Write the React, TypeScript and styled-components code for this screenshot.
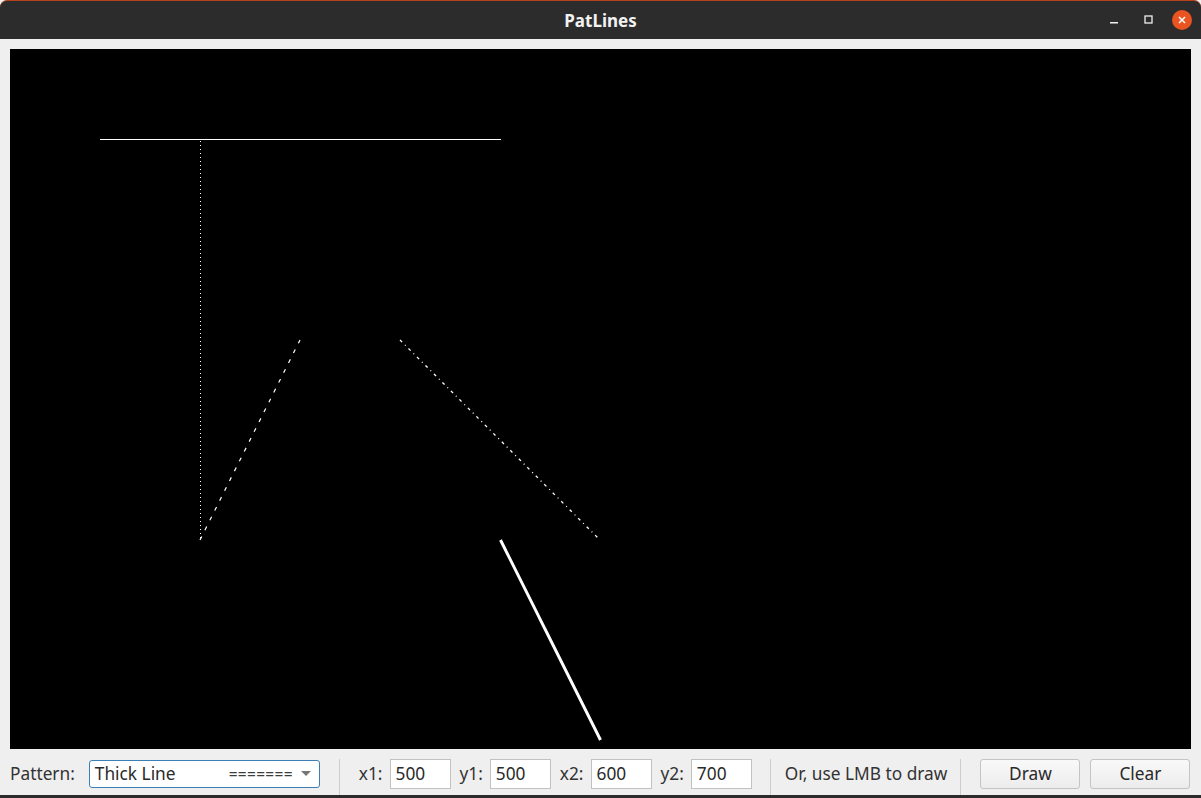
import React from "react";
import styled, { createGlobalStyle } from "styled-components";

const Global = createGlobalStyle`
  html, body { margin: 0; padding: 0; background: #2b2b2b; }
  body { font-family: "Noto Sans", "DejaVu Sans", sans-serif; }
  * { box-sizing: border-box; }
`;

const Window = styled.div`
  width: 1201px;
  height: 798px;
  display: flex;
  flex-direction: column;
  background: #efefef;
  overflow: hidden;
`;

const TitleBar = styled.div`
  height: 39px;
  flex: none;
  position: relative;
  display: flex;
  align-items: center;
  justify-content: center;
  background: #2c2c2c;
  border-top: 1px solid #b5421f;
  border-radius: 7px 7px 0 0;
  color: #f2f2f2;
  font-weight: 700;
  font-size: 17px;
`;

const Controls = styled.div`
  position: absolute;
  right: 9px;
  top: 0;
  bottom: 0;
  display: flex;
  align-items: center;
`;

const CtrlBtn = styled.div`
  width: 34px;
  height: 24px;
  display: flex;
  align-items: center;
  justify-content: center;
`;

const CloseBtn = styled.div`
  width: 20px;
  height: 20px;
  margin-left: 6px;
  border-radius: 50%;
  background: #e95420;
  display: flex;
  align-items: center;
  justify-content: center;
`;

const Body = styled.div`
  flex: 1;
  display: flex;
  flex-direction: column;
  padding: 10px 10px 0 10px;
`;

const Canvas = styled.svg`
  display: block;
  width: 1181px;
  height: 700px;
  background: #000;
  flex: none;
`;

const Toolbar = styled.div`
  height: 46px;
  display: flex;
  align-items: center;
  color: #333;
  font-size: 17.3px;
  padding-top: 3px;
`;

const Label = styled.span<{ $ml?: number }>`
  margin-left: ${(p) => p.$ml ?? 0}px;
  margin-right: 7px;
  white-space: nowrap;
`;

const Combo = styled.div`
  width: 231px;
  height: 28px;
  margin-left: 7px;
  border: 1px solid #3c7fb7;
  border-radius: 3px;
  background: #fff;
  display: flex;
  align-items: center;
  padding: 0 8px 0 5px;
  color: #2a2a2a;
`;

const ComboText = styled.span`
  flex: 1;
`;

const ComboPattern = styled.span`
  font-size: 15.5px;
  letter-spacing: 0.3px;
  color: #3c3c3c;
  margin-right: 8px;
`;

const Arrow = styled.span`
  width: 0;
  height: 0;
  border-left: 5px solid transparent;
  border-right: 5px solid transparent;
  border-top: 5px solid #777;
`;

const Sep = styled.div<{ $ml: number; $mr: number }>`
  width: 1px;
  align-self: stretch;
  margin: 7px ${(p) => p.$mr}px 0 ${(p) => p.$ml}px;
  background: #cdcdcd;
`;

const Field = styled.div`
  width: 61px;
  height: 30px;
  border: 1px solid #c2c2c2;
  background: #fff;
  display: flex;
  align-items: center;
  padding-left: 5px;
  color: #2a2a2a;
`;

const Button = styled.div<{ $ml: number }>`
  width: 100px;
  height: 30px;
  margin-left: ${(p) => p.$ml}px;
  border: 1px solid #c4c4c4;
  border-radius: 3px;
  background: linear-gradient(#f9f9f9, #ececec);
  display: flex;
  align-items: center;
  justify-content: center;
  color: #2a2a2a;
`;

const BottomEdge = styled.div`
  height: 3px;
  flex: none;
  background: #2b2b2b;
`;

export default function App() {
  return (
    <>
      <Global />
      <Window>
        <TitleBar>
          PatLines
          <Controls>
            <CtrlBtn>
              <svg width="10" height="10" viewBox="0 0 10 10">
                <rect x="0" y="7" width="8" height="1.5" fill="#f0f0f0" />
              </svg>
            </CtrlBtn>
            <CtrlBtn>
              <svg width="10" height="10" viewBox="0 0 10 10">
                <rect x="1" y="1" width="7" height="7" fill="none" stroke="#f0f0f0" strokeWidth="1.3" />
              </svg>
            </CtrlBtn>
            <CloseBtn>
              <svg width="10" height="10" viewBox="0 0 10 10">
                <path d="M2 2 L8 8 M8 2 L2 8" stroke="#fff" strokeWidth="1.5" />
              </svg>
            </CloseBtn>
          </Controls>
        </TitleBar>
        <Body>
          <Canvas viewBox="10 49 1181 700">
            <g stroke="#fff" fill="none" shapeRendering="crispEdges">
              <line x1="100" y1="139.5" x2="501" y2="139.5" strokeWidth="1" />
              <line x1="200.5" y1="141" x2="200.5" y2="541" strokeWidth="1" strokeDasharray="1 3" />
            </g>
            <g stroke="#fff" fill="none">
              <line x1="200" y1="540" x2="300" y2="340" strokeWidth="1.2" strokeDasharray="4 7" />
              <line x1="400" y1="340" x2="600" y2="540" strokeWidth="1.3" strokeDasharray="3 4 1 4" />
              <line x1="500.5" y1="540" x2="600.5" y2="740" strokeWidth="3" />
            </g>
          </Canvas>
          <Toolbar>
            <Label>Pattern:</Label>
            <Combo>
              <ComboText>Thick Line</ComboText>
              <ComboPattern>=======</ComboPattern>
              <Arrow />
            </Combo>
            <Sep $ml={19} $mr={19} />
            <Label>x1:</Label>
            <Field>500</Field>
            <Label $ml={9}>y1:</Label>
            <Field>500</Field>
            <Label $ml={9}>x2:</Label>
            <Field>600</Field>
            <Label $ml={9}>y2:</Label>
            <Field>700</Field>
            <Sep $ml={18} $mr={14} />
            <Label>Or, use LMB to draw</Label>
            <Sep $ml={6} $mr={0} />
            <Button $ml={19}>Draw</Button>
            <Button $ml={10}>Clear</Button>
          </Toolbar>
        </Body>
        <BottomEdge />
      </Window>
    </>
  );
}
